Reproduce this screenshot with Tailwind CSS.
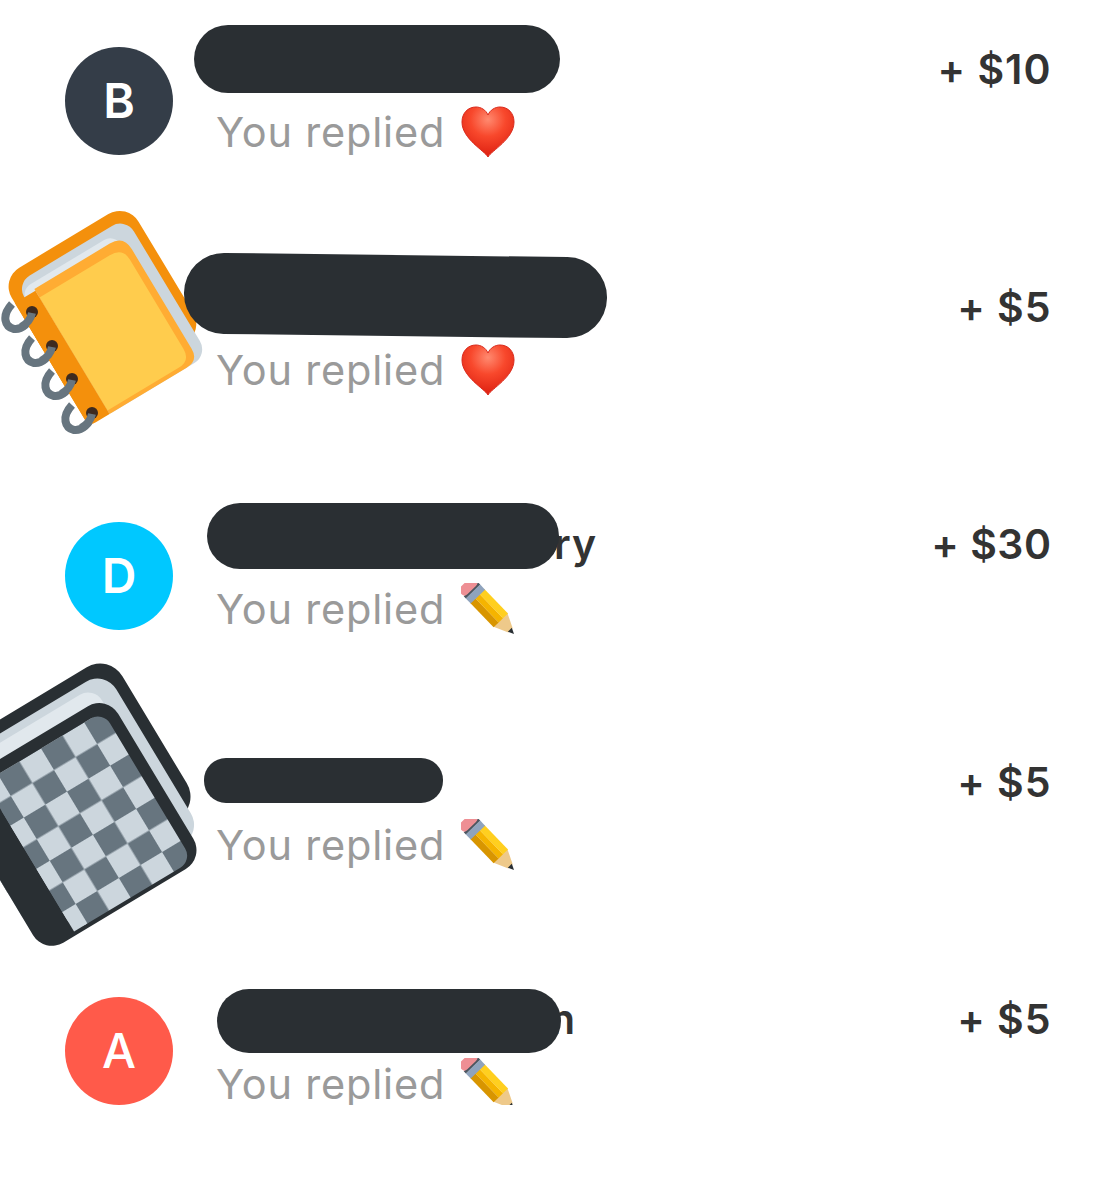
<!DOCTYPE html>
<html lang="en">
<head>
  <meta charset="UTF-8">
  <title>Replies</title>
  <script src="https://cdn.jsdelivr.net/npm/@tailwindcss/browser@4"></script>
</head>
<body class="bg-white font-['Inter',sans-serif] overflow-hidden">
  <svg width="0" height="0" class="absolute">
    <defs>
      <radialGradient id="heartFill" cx="50%" cy="25%" r="75%">
        <stop offset="0" stop-color="#ff8a70"/>
        <stop offset="0.45" stop-color="#f8482c"/>
        <stop offset="1" stop-color="#dd1f10"/>
      </radialGradient>
      <pattern id="checks" x="15.6" y="-3" width="50.4" height="50.4" patternUnits="userSpaceOnUse">
        <rect width="50.4" height="50.4" fill="#CCD6DD"/>
        <rect width="25.2" height="25.2" fill="#67757F"/>
        <rect x="25.2" y="25.2" width="25.2" height="25.2" fill="#67757F"/>
      </pattern>
      <symbol id="heart" viewBox="0 0 54 52">
        <path d="M27 51C24 45 1 33 1 16 1 7 7 1 15 1c5 0 10 3 12 8 2-5 7-8 12-8 8 0 14 6 14 15 0 17-23 29-26 35z" fill="url(#heartFill)" stroke="#d9281a" stroke-width="1"/>
      </symbol>
      <symbol id="pencil" viewBox="0 0 54 52">
        <g transform="translate(53 51) rotate(46)">
          <path d="M-20-10V10L-5 3V-3z" fill="#eec98a"/>
          <path d="M-6-2.8V2.8L0 0z" fill="#292f33"/>
          <rect x="-53" y="-10" width="34" height="7" fill="#ffcf1f"/>
          <rect x="-53" y="-3" width="34" height="6" fill="#f5b400"/>
          <rect x="-53" y="3" width="34" height="7" fill="#d89500"/>
          <rect x="-59" y="-10" width="7" height="20" fill="#8fa3bd"/>
          <rect x="-62" y="-10" width="3" height="20" fill="#4b5560"/>
          <rect x="-71" y="-10" width="10" height="20" rx="4" fill="#ee8f94"/>
        </g>
      </symbol>
    </defs>
  </svg>

  <main class="flex flex-col gap-[129.5px] pt-[47px] pl-[65px] pr-[65.5px]">

    <!-- row 1 -->
    <div class="relative flex h-[108px]">
      <div class="w-[108px] h-[108px] rounded-full bg-[#343d48] text-white flex items-center justify-center text-[48px] font-semibold shrink-0">B</div>
      <div class="ml-[43px] flex-1 flex flex-col gap-[19px] -mt-px">
        <p class="h-[46px]"></p>
        <p class="flex items-center h-[46px] text-[41.5px] leading-[46px] tracking-[0.8px] text-[#9a9a9a]">You replied<svg class="ml-[16px] w-[54px] h-[52px]"><use href="#heart"/></svg></p>
      </div>
      <p class="text-[41px] leading-[46px] tracking-[1px] font-semibold text-[#333333] -mt-px">+ $10</p>
      <div class="absolute left-[129px] top-[-22px] w-[366px] h-[68px] rounded-[34px] bg-[#2a2f33]"></div>
    </div>

    <!-- row 2 -->
    <div class="relative flex h-[108px]">
      <div class="w-[108px] h-[108px] shrink-0"></div>
      <div class="ml-[43px] flex-1 flex flex-col gap-[19px] -mt-px">
        <p class="h-[46px]"></p>
        <p class="flex items-center h-[46px] text-[41.5px] leading-[46px] tracking-[0.8px] text-[#9a9a9a]">You replied<svg class="ml-[16px] w-[54px] h-[52px]"><use href="#heart"/></svg></p>
      </div>
      <p class="text-[41px] leading-[46px] tracking-[1px] font-semibold text-[#333333] -mt-px">+ $5</p>
      <svg class="absolute left-[-65px] top-[-84.5px]" width="220" height="240" viewBox="0 0 220 240">
        <g stroke="#67757F" stroke-width="8" fill="none">
          <path d="M32 113C30 123 22 130 14 129 5 127 1 116 12 104"/>
          <path d="M52 147C50 157 42 164 34 163 25 161 21 150 32 138"/>
          <path d="M72 180C70 190 62 197 54 196 45 194 41 183 52 171"/>
          <path d="M92 214C90 224 82 231 74 230 65 228 61 217 72 205"/>
        </g>
        <g transform="matrix(.857 -.515 .515 .857 .4 79)">
          <rect x="0" y="0" width="148" height="150" rx="22" fill="#F4900C"/>
          <rect x="0" y="40" width="60" height="130" rx="6" fill="#F4900C"/>
          <rect x="11" y="12" width="128" height="160" rx="16" fill="#CCD6DD"/>
          <rect x="11" y="20" width="110" height="60" rx="12" fill="#E1E8ED"/>
          <path d="M24 26H112Q128 26 128 42V158Q128 172 114 172H24z" fill="#FFAC33"/>
          <path d="M24 36H106Q121 36 121 50V154Q121 168 107 168H24z" fill="#FFCC4D"/>
          <path d="M0 28H24V172H8Q0 172 0 164z" fill="#F4900C"/>
        </g>
        <g fill="#3d2a1f">
          <circle cx="32" cy="112" r="6"/>
          <circle cx="52" cy="146" r="6"/>
          <circle cx="72" cy="179" r="6"/>
          <circle cx="92" cy="213" r="6"/>
        </g>
        <g stroke="#67757F" stroke-width="8" fill="none">
          <path d="M32 113C31 118 27 124 21 127"/>
          <path d="M52 147C51 152 47 158 41 161"/>
          <path d="M72 180C71 185 67 191 61 194"/>
          <path d="M92 214C91 219 87 225 81 228"/>
        </g>
      </svg>
      <div class="absolute left-[119px] top-[-30px] w-[423px] h-[81px] rounded-[40px] bg-[#2a2f33] rotate-[0.7deg]"></div>
    </div>

    <!-- row 3 -->
    <div class="relative flex h-[108px]">
      <div class="w-[108px] h-[108px] rounded-full bg-[#00c8ff] text-white flex items-center justify-center text-[48px] font-semibold shrink-0">D</div>
      <div class="ml-[43px] flex-1 flex flex-col gap-[19px] -mt-px">
        <p class="h-[46px] pl-[338px] text-[41px] leading-[46px] tracking-[1px] font-semibold text-[#333333]">ry</p>
        <p class="flex items-center h-[46px] text-[41.5px] leading-[46px] tracking-[0.8px] text-[#9a9a9a]">You replied<svg class="ml-[16px] w-[54px] h-[52px]"><use href="#pencil"/></svg></p>
      </div>
      <p class="text-[41px] leading-[46px] tracking-[0.5px] font-semibold text-[#333333] -mt-px">+ $30</p>
      <div class="absolute left-[142px] top-[-19.5px] w-[352px] h-[66px] rounded-[33px] bg-[#2a2f33]"></div>
    </div>

    <!-- row 4 -->
    <div class="relative flex h-[108px]">
      <div class="w-[108px] h-[108px] shrink-0"></div>
      <div class="ml-[43px] flex-1 flex flex-col gap-[19px] -mt-px">
        <p class="h-[46px]"></p>
        <p class="flex items-center h-[46px] text-[41.5px] leading-[46px] tracking-[0.8px] text-[#9a9a9a]">You replied<svg class="ml-[16px] w-[54px] h-[52px]"><use href="#pencil"/></svg></p>
      </div>
      <p class="text-[41px] leading-[46px] tracking-[1px] font-semibold text-[#333333] -mt-px">+ $5</p>
      <svg class="absolute left-[-65px] top-[-104.5px]" width="220" height="295" viewBox="0 0 220 295">
        <g transform="matrix(.857 -.515 .515 .857 -14 130)">
          <rect x="-37" y="-49" width="210" height="177" rx="26" fill="#292F33"/>
          <rect x="-37" y="-37" width="198" height="189" rx="22" fill="#CCD6DD"/>
          <rect x="-37" y="-29" width="180" height="60" rx="16" fill="#E1E8ED"/>
          <rect x="-37" y="-15" width="187" height="190" rx="22" fill="#292F33"/>
          <rect x="0" y="-3" width="138" height="174" rx="14" fill="url(#checks)"/>
          <rect x="0" y="30" width="14" height="141" fill="url(#checks)"/>
        </g>
      </svg>
      <div class="absolute left-[139px] top-[-1.5px] w-[239px] h-[45px] rounded-[22px] bg-[#2a2f33]"></div>
    </div>

    <!-- row 5 -->
    <div class="relative flex h-[108px]">
      <div class="w-[108px] h-[108px] rounded-full bg-[#ff5a4a] text-white flex items-center justify-center text-[48px] font-medium shrink-0">A</div>
      <div class="ml-[43px] flex-1 flex flex-col gap-[19px] -mt-px">
        <p class="h-[46px] pl-[334px] text-[41px] leading-[46px] font-semibold text-[#333333]">n</p>
        <p class="flex items-center h-[46px] text-[41.5px] leading-[46px] tracking-[0.8px] text-[#9a9a9a]">You replied<svg class="ml-[16px] w-[54px] h-[52px]"><use href="#pencil"/></svg></p>
      </div>
      <p class="text-[41px] leading-[46px] tracking-[1px] font-semibold text-[#333333] -mt-px">+ $5</p>
      <div class="absolute left-[152px] top-[-8px] w-[344px] h-[64px] rounded-[32px] bg-[#2a2f33]"></div>
    </div>

  </main>
</body>
</html>
